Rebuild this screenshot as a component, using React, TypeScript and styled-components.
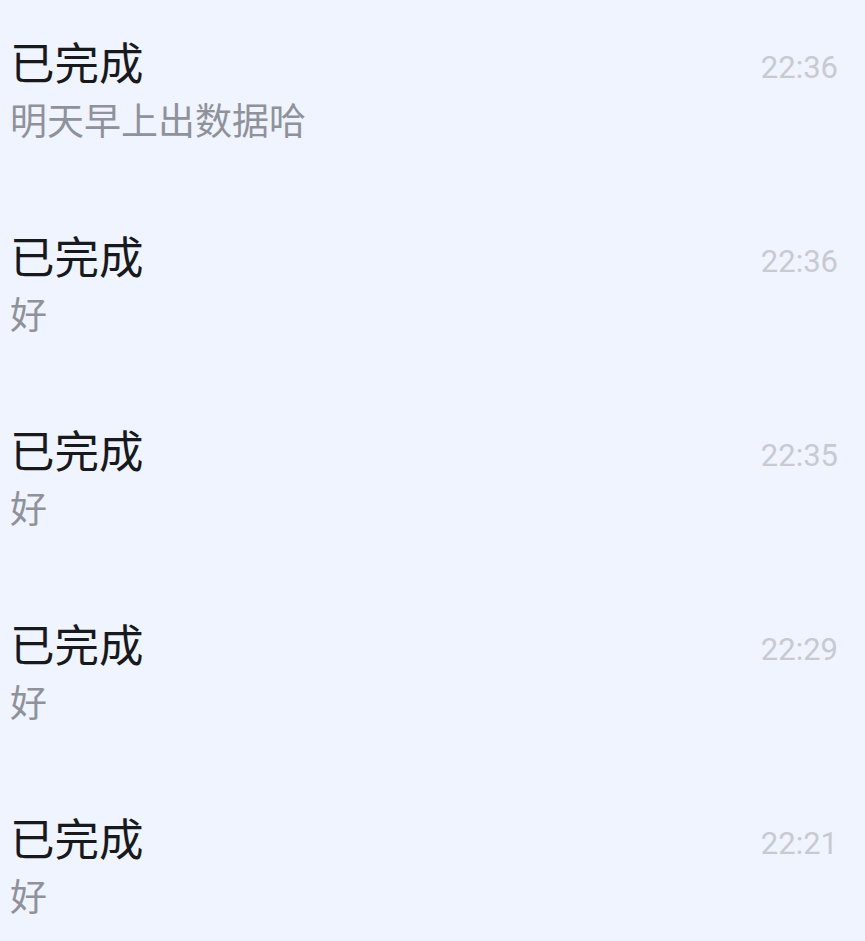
import styled, { createGlobalStyle } from 'styled-components';

interface Message {
    title: string;
    preview: string;
    time: string;
}

const messages: Array<Message> = [
    {title: '已完成', preview: '明天早上出数据哈', time: '22:36'},
    {title: '已完成', preview: '好', time: '22:36'},
    {title: '已完成', preview: '好', time: '22:35'},
    {title: '已完成', preview: '好', time: '22:29'},
    {title: '已完成', preview: '好', time: '22:21'},
];

const GlobalStyle = createGlobalStyle`
    html, body {
        margin: 0;
        padding: 0;
        background: #f0f4fe;
    }
    body {
        font-family: Roboto, "Noto Sans CJK SC", sans-serif;
    }
`;

const List = styled.div`
    width: 865px;
    height: 941px;
    overflow: hidden;
    background: #f0f4fe;
    display: flex;
    flex-direction: column;
`;

const Row = styled.div`
    height: 194px;
    flex-shrink: 0;
    box-sizing: border-box;
    padding: 33px 27px 0 10px;
    display: flex;
    flex-direction: column;
`;

const TopLine = styled.div`
    display: flex;
    align-items: center;
    justify-content: space-between;
    height: 56px;
`;

const Title = styled.div`
    font-family: "Noto Sans CJK SC", sans-serif;
    font-size: 44.5px;
    line-height: 56px;
    color: #18191c;
`;

const Time = styled.div`
    font-family: Roboto, sans-serif;
    font-size: 31px;
    color: #c8cad2;
    margin-top: 12px;
`;

const Preview = styled.div`
    margin-top: 5px;
    font-family: "Noto Sans CJK SC", sans-serif;
    font-size: 37px;
    line-height: 50px;
    color: #8f929b;
`;

export default function App() {
    return (
        <>
            <GlobalStyle />
            <List>
                {messages.map((value, index) => (
                    <Row key={index}>
                        <TopLine>
                            <Title>{value.title}</Title>
                            <Time>{value.time}</Time>
                        </TopLine>
                        <Preview>{value.preview}</Preview>
                    </Row>
                ))}
            </List>
        </>
    );
}
